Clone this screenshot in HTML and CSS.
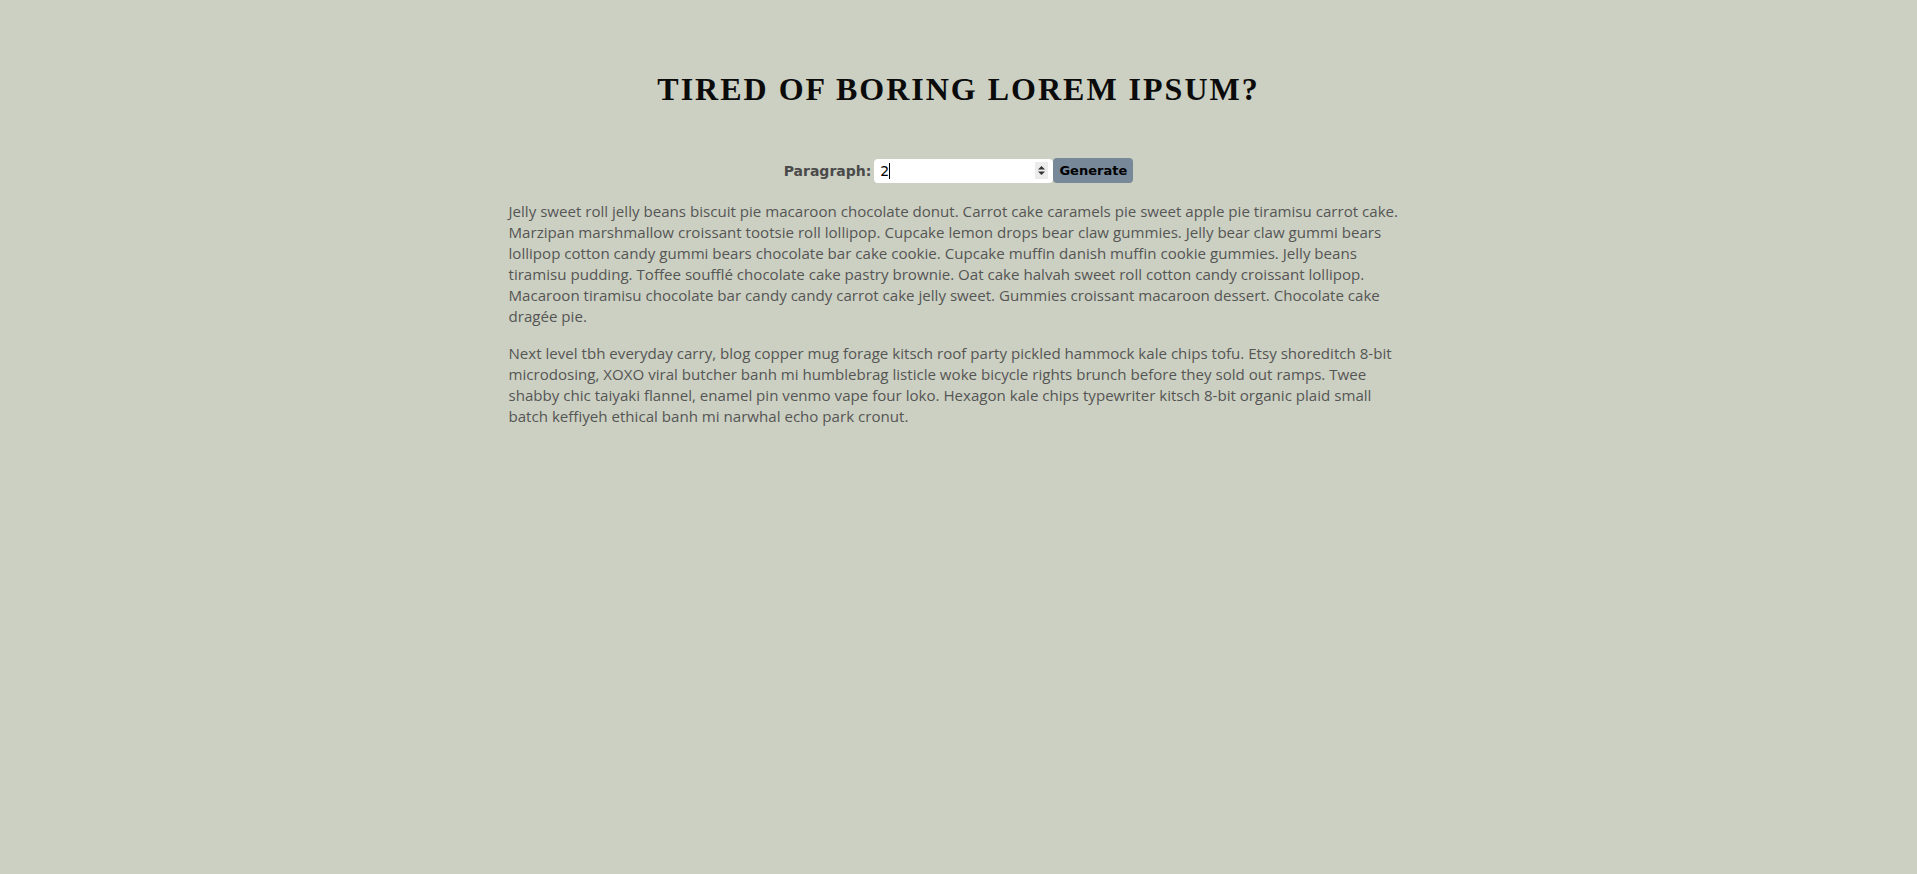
FILE: index.html
```html
<!DOCTYPE html>
<html lang="en">
<head>
<meta charset="utf-8">
<title>Lorem Ipsum Generator</title>
<link rel="stylesheet" href="styles.css">
</head>
<body>
<main class="page">
  <h1 class="title">TIRED OF BORING LOREM IPSUM?</h1>
  <form class="controls">
    <label class="label" for="amount">Paragraph:</label>
    <div class="numbox">
      <span class="value">2</span><span class="caret"></span>
      <svg class="spin" width="9" height="11" viewBox="0 0 9 11" aria-hidden="true">
        <path d="M4.5 1 L8 4.5 L1 4.5 Z" fill="#333"/>
        <path d="M4.5 10 L8 6.5 L1 6.5 Z" fill="#333"/>
      </svg>
    </div>
    <button class="btn" type="button">Generate</button>
  </form>
  <article class="text">
    <p>Jelly sweet roll jelly beans biscuit pie macaroon chocolate donut. Carrot cake caramels pie sweet apple pie tiramisu carrot cake. Marzipan marshmallow croissant tootsie roll lollipop. Cupcake lemon drops bear claw gummies. Jelly bear claw gummi bears lollipop cotton candy gummi bears chocolate bar cake cookie. Cupcake muffin danish muffin cookie gummies. Jelly beans tiramisu pudding. Toffee soufflé chocolate cake pastry brownie. Oat cake halvah sweet roll cotton candy croissant lollipop. Macaroon tiramisu chocolate bar candy candy carrot cake jelly sweet. Gummies croissant macaroon dessert. Chocolate cake dragée pie.</p>
    <p>Next level tbh everyday carry, blog copper mug forage kitsch roof party pickled hammock kale chips tofu. Etsy shoreditch 8-bit microdosing, XOXO viral butcher banh mi humblebrag listicle woke bicycle rights brunch before they sold out ramps. Twee shabby chic taiyaki flannel, enamel pin venmo vape four loko. Hexagon kale chips typewriter kitsch 8-bit organic plaid small batch keffiyeh ethical banh mi narwhal echo park cronut.</p>
  </article>
</main>
</body>
</html>
```

FILE: styles.css
```css
html, body {
  margin: 0;
  padding: 0;
  background: #ccd0c2;
  min-height: 100%;
}

.page {
  width: 900px;
  margin: 0 auto;
  padding-top: 71px;
}

.title {
  margin: 0;
  text-align: center;
  font-family: "Liberation Serif", "Times New Roman", serif;
  font-weight: 700;
  font-size: 32px;
  line-height: 37px;
  letter-spacing: 2px;
  color: #0b0b0b;
}

.controls {
  margin-top: 50px;
  display: flex;
  justify-content: center;
  align-items: center;
  height: 25px;
}

.label {
  font-family: "DejaVu Sans", Verdana, sans-serif;
  font-weight: 700;
  font-size: 14px;
  color: #4a4a4a;
  margin-right: 3px;
}

.numbox {
  box-sizing: border-box;
  width: 179px;
  height: 24px;
  background: #fff;
  border-radius: 4px;
  display: flex;
  align-items: center;
  padding: 0 5px 0 6px;
  font-family: "DejaVu Sans", Verdana, sans-serif;
  font-size: 14px;
  color: #000;
}

.value {
  line-height: 1;
}

.caret {
  width: 1px;
  height: 16px;
  background: #000;
}

.spin {
  margin-left: auto;
  background: #ececec;
  padding: 3px 2px;
}

.btn {
  box-sizing: border-box;
  width: 80px;
  height: 25px;
  border: none;
  border-radius: 4px;
  background: #778899;
  color: #000;
  font-family: "DejaVu Sans", Verdana, sans-serif;
  font-weight: 700;
  font-size: 13px;
  padding: 0;
  cursor: pointer;
}

.text {
  margin-top: 18px;
  font-family: "Open Sans", "Noto Sans", sans-serif;
  font-size: 15.1px;
  line-height: 21px;
  color: #555;
}

.text p {
  margin: 0 0 16px;
}
```
